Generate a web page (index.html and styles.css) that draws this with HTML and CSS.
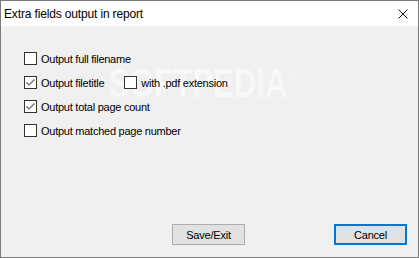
FILE: index.html
```html
<!DOCTYPE html>
<html lang="en">
<head>
  <meta charset="UTF-8">
  <title>Extra fields output in report</title>
  <link rel="stylesheet" href="styles.css">
</head>
<body>
  <div class="window">
    <div class="titlebar">
      <span class="title">Extra fields output in report</span>
      <svg class="close" width="10" height="10" viewBox="0 0 10 10">
        <path d="M0.5 0.5 L9.5 9.5 M9.5 0.5 L0.5 9.5" stroke="#111" stroke-width="1" fill="none"/>
      </svg>
    </div>
    <div class="content">
      <div class="watermark">SOFTPEDIA<sup>®</sup></div>
      <div class="options">
        <label class="check-row">
          <span class="box"></span>
          <span class="label">Output full filename</span>
        </label>
        <div class="check-row">
          <label class="check-row">
            <span class="box checked">
              <svg width="11" height="11" viewBox="0 0 11 11"><path d="M1.5 5.5 L4 8 L9.5 2.5" stroke="#666" stroke-width="1.2" fill="none"/></svg>
            </span>
            <span class="label">Output filetitle</span>
          </label>
          <label class="check-row sub">
            <span class="box"></span>
            <span class="label">with .pdf extension</span>
          </label>
        </div>
        <label class="check-row">
          <span class="box checked">
            <svg width="11" height="11" viewBox="0 0 11 11"><path d="M1.5 5.5 L4 8 L9.5 2.5" stroke="#666" stroke-width="1.2" fill="none"/></svg>
          </span>
          <span class="label">Output total page count</span>
        </label>
        <label class="check-row">
          <span class="box"></span>
          <span class="label">Output matched page number</span>
        </label>
      </div>
      <div class="buttons">
        <button class="btn">Save/Exit</button>
        <button class="btn default">Cancel</button>
      </div>
    </div>
  </div>
</body>
</html>
```

FILE: styles.css
```css
/* General Styles */
body {
  margin: 0;
  padding: 0;
  font-family: 'Liberation Sans', Arial, sans-serif;
  font-size: 11px;
  color: #000;
}

.window {
  width: 419px;
  height: 258px;
  box-sizing: border-box;
  border: 1px solid #7a7a7a;
  display: flex;
  flex-direction: column;
  background: #f0f0f0;
}

/* Title bar */
.titlebar {
  height: 25px;
  background: #fff;
  display: flex;
  align-items: center;
  justify-content: space-between;
  padding: 0 10px 0 3px;
}

.title {
  font-family: 'Liberation Sans', Arial, sans-serif;
  font-size: 12px;
  letter-spacing: -0.15px;
}

.close {
  display: block;
}

/* Content */
.content {
  flex: 1;
  position: relative;
  display: flex;
  flex-direction: column;
  padding: 26px 0 12px 23px;
}

.options {
  position: relative;
  z-index: 1;
  display: flex;
  flex-direction: column;
  gap: 11px;
}

.check-row {
  display: flex;
  align-items: center;
  height: 13px;
}

.check-row.sub {
  margin-left: 20px;
}

.box {
  width: 13px;
  height: 13px;
  box-sizing: border-box;
  border: 1px solid #333;
  background: #fff;
  display: flex;
  align-items: center;
  justify-content: center;
}

.box svg {
  display: block;
}

.label {
  margin-left: 4px;
  letter-spacing: -0.25px;
  white-space: nowrap;
}

/* Buttons */
.buttons {
  margin-top: auto;
  display: flex;
  justify-content: flex-end;
  gap: 89px;
  padding-right: 11px;
}

.btn {
  width: 73px;
  height: 21px;
  box-sizing: border-box;
  background: #e1e1e1;
  border: 1px solid #adadad;
  font-family: 'Liberation Sans', Arial, sans-serif;
  font-size: 11px;
  letter-spacing: -0.2px;
  padding: 0;
  color: #000;
}

.btn.default {
  border: 2px solid #0078d7;
}

/* Watermark */
.watermark {
  position: absolute;
  left: 108px;
  top: 35px;
  font-family: 'Liberation Sans', Arial, sans-serif;
  font-weight: bold;
  font-size: 40px;
  color: #fff;
  opacity: 0.55;
  transform: scaleX(0.78);
  transform-origin: left top;
  pointer-events: none;
}

.watermark sup {
  font-size: 12px;
  font-weight: normal;
}
```
